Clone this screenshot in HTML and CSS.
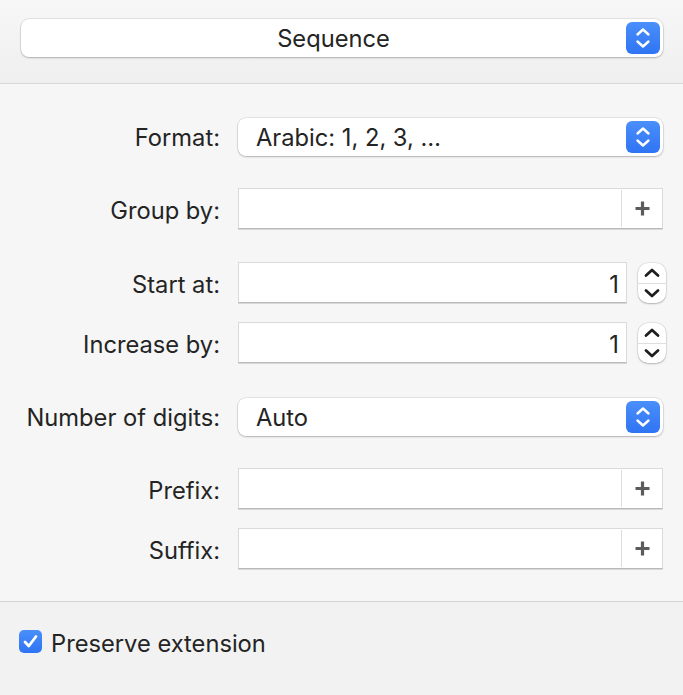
FILE: index.html
```html
<!DOCTYPE html>
<html>
<head>
<meta charset="utf-8">
<link rel="stylesheet" href="styles.css">
</head>
<body>
<div class="panel">
  <header class="head">
    <div class="popup popup-main">
      <span class="popup-text center">Sequence</span>
      <span class="popup-btn">
        <svg width="34" height="32" viewBox="0 0 34 32"><path d="M11.5 12.5 L17 7.5 L22.5 12.5 M11.5 19.5 L17 24.5 L22.5 19.5" fill="none" stroke="#fff" stroke-width="2.4" stroke-linecap="round" stroke-linejoin="round"/></svg>
      </span>
    </div>
  </header>

  <main class="form">
    <div class="row r-format">
      <label class="lbl">Format:</label>
      <div class="popup">
        <span class="popup-text">Arabic: 1, 2, 3, …</span>
        <span class="popup-btn">
          <svg width="34" height="32" viewBox="0 0 34 32"><path d="M11.5 12.5 L17 7.5 L22.5 12.5 M11.5 19.5 L17 24.5 L22.5 19.5" fill="none" stroke="#fff" stroke-width="2.4" stroke-linecap="round" stroke-linejoin="round"/></svg>
        </span>
      </div>
    </div>

    <div class="row field-row r-group">
      <label class="lbl">Group by:</label>
      <div class="field token">
        <span class="field-val"></span>
        <span class="plus"><svg width="17" height="17" viewBox="0 0 17 17"><path d="M8.5 1.5 V15.5 M1.5 8.5 H15.5" stroke="#5b5b5b" stroke-width="3.2"/></svg></span>
      </div>
    </div>

    <div class="row field-row r-start">
      <label class="lbl">Start at:</label>
      <div class="stepper-wrap">
        <div class="field num"><span class="field-val">1</span></div>
        <div class="stepper">
          <svg width="28" height="40" viewBox="0 0 28 40"><path d="M8 12.5 L14 7 L20 12.5 M8 27.5 L14 33 L20 27.5" fill="none" stroke="#1f1f1f" stroke-width="2.8" stroke-linecap="round" stroke-linejoin="round"/></svg>
        </div>
      </div>
    </div>

    <div class="row field-row r-inc">
      <label class="lbl">Increase by:</label>
      <div class="stepper-wrap">
        <div class="field num"><span class="field-val">1</span></div>
        <div class="stepper">
          <svg width="28" height="40" viewBox="0 0 28 40"><path d="M8 12.5 L14 7 L20 12.5 M8 27.5 L14 33 L20 27.5" fill="none" stroke="#1f1f1f" stroke-width="2.8" stroke-linecap="round" stroke-linejoin="round"/></svg>
        </div>
      </div>
    </div>

    <div class="row r-digits">
      <label class="lbl">Number of digits:</label>
      <div class="popup">
        <span class="popup-text">Auto</span>
        <span class="popup-btn">
          <svg width="34" height="32" viewBox="0 0 34 32"><path d="M11.5 12.5 L17 7.5 L22.5 12.5 M11.5 19.5 L17 24.5 L22.5 19.5" fill="none" stroke="#fff" stroke-width="2.4" stroke-linecap="round" stroke-linejoin="round"/></svg>
        </span>
      </div>
    </div>

    <div class="row field-row r-prefix">
      <label class="lbl">Prefix:</label>
      <div class="field token">
        <span class="field-val"></span>
        <span class="plus"><svg width="17" height="17" viewBox="0 0 17 17"><path d="M8.5 1.5 V15.5 M1.5 8.5 H15.5" stroke="#5b5b5b" stroke-width="3.2"/></svg></span>
      </div>
    </div>

    <div class="row field-row r-suffix">
      <label class="lbl">Suffix:</label>
      <div class="field token">
        <span class="field-val"></span>
        <span class="plus"><svg width="17" height="17" viewBox="0 0 17 17"><path d="M8.5 1.5 V15.5 M1.5 8.5 H15.5" stroke="#5b5b5b" stroke-width="3.2"/></svg></span>
      </div>
    </div>
  </main>

  <footer class="foot">
    <span class="check">
      <svg width="23" height="23" viewBox="0 0 23 23"><path d="M6 12 L9.8 16 L17 6.5" fill="none" stroke="#fff" stroke-width="2.8" stroke-linecap="round" stroke-linejoin="round"/></svg>
    </span>
    <span class="check-label">Preserve extension</span>
  </footer>
</div>
</body>
</html>
```

FILE: styles.css
```css
html, body {
  margin: 0;
  padding: 0;
}
body {
  width: 683px;
  height: 695px;
  background: #f6f6f6;
  font-family: Inter, "Liberation Sans", sans-serif;
  font-size: 23.7px;
  color: #242424;
  overflow: hidden;
}
.panel {
  display: flex;
  flex-direction: column;
  height: 695px;
}
.head {
  height: 84px;
  box-sizing: border-box;
  padding: 19px 20px 0 21px;
  background: linear-gradient(#f7f7f7, #efefef);
  border-bottom: 1px solid #d7d7d7;
}
.popup {
  height: 38px;
  box-sizing: border-box;
  background: #fff;
  border-radius: 8px;
  box-shadow: 0 0 0 0.5px rgba(0,0,0,0.14), 0 1px 2px rgba(0,0,0,0.22);
  display: flex;
  align-items: center;
  position: relative;
}
.popup-text {
  flex: 1;
  padding-left: 18px;
  white-space: nowrap;
}
.popup-text.center {
  text-align: center;
  padding-left: 0;
  padding-right: 0;
  margin-right: -20px;
}
.popup-btn {
  width: 34px;
  height: 32px;
  margin-right: 3px;
  border-radius: 6px;
  background: linear-gradient(#4a8ffa, #2f74f3);
  display: flex;
}
.form {
  flex: 1;
  padding: 34px 20px 0 0;
  display: flex;
  flex-direction: column;
}
.row {
  display: grid;
  grid-template-columns: 220px 1fr;
  column-gap: 18px;
  align-items: center;
}
.lbl {
  text-align: right;
  white-space: nowrap;
}
.field-row .lbl {
  padding-top: 3px;
}
.r-group { margin-top: 32px; }
.r-start { margin-top: 33px; }
.r-inc { margin-top: 19px; }
.r-digits { margin-top: 35px; }
.r-prefix { margin-top: 32px; }
.r-suffix { margin-top: 19px; }

.field {
  height: 41px;
  box-sizing: border-box;
  background: #fff;
  border: 1px solid #dadada;
  border-bottom-color: #b9b9b9;
  box-shadow: 0 0.5px 0.5px rgba(0,0,0,0.12);
  display: flex;
  align-items: stretch;
}
.field-val {
  flex: 1;
  display: flex;
  align-items: center;
  padding-top: 3px;
}
.field.num .field-val {
  justify-content: flex-end;
  padding-right: 7px;
}
.plus {
  width: 40px;
  border-left: 1px solid #dcdcdc;
  display: flex;
  align-items: center;
  justify-content: center;
  margin: 1px 0;
}
.stepper-wrap {
  display: flex;
  align-items: center;
  gap: 11px;
  margin-right: -3px;
}
.stepper-wrap .field {
  flex: 1;
}
.stepper {
  width: 28px;
  height: 40px;
  border-radius: 10px;
  background: #fff;
  box-shadow: 0 0 0 0.5px rgba(0,0,0,0.12), 0 1px 2px rgba(0,0,0,0.22);
  position: relative;
  display: flex;
}
.stepper::after {
  content: "";
  position: absolute;
  left: 0;
  right: 0;
  top: 20px;
  height: 1px;
  background: #dedede;
}
.foot {
  height: 94px;
  box-sizing: border-box;
  border-top: 1px solid #d2d2d2;
  background: #f2f2f2;
  display: flex;
  align-items: flex-start;
  padding: 28px 0 0 19px;
  gap: 9px;
}
.check {
  width: 23px;
  height: 23px;
  border-radius: 5px;
  background: linear-gradient(#4a8ffa, #2f74f3);
  display: flex;
}
.check-label {
  line-height: 23px;
  padding-top: 2px;
}
```
